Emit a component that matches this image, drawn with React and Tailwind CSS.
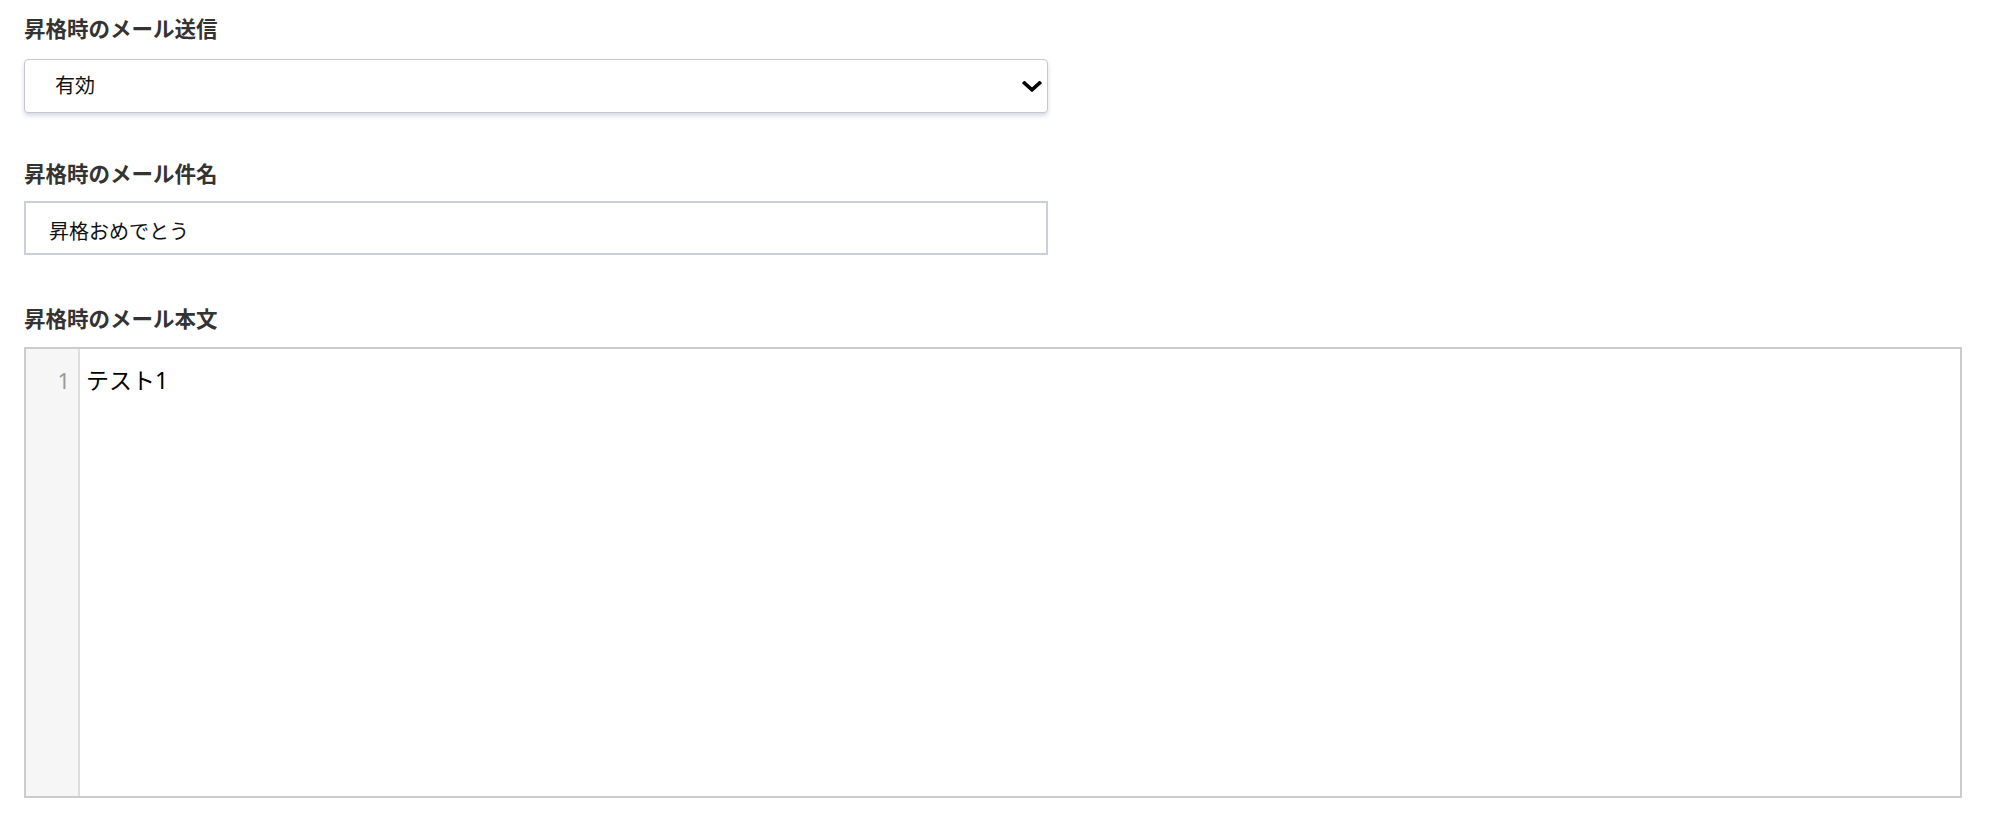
import React, { useState } from "react";

const FONT = { fontFamily: '"Noto Sans", "Noto Sans CJK JP", sans-serif' };

function FieldLabel({ children, className = "" }) {
  return (
    <div className={`text-[21.5px] leading-[30px] font-bold text-[#333333] ${className}`}>
      {children}
    </div>
  );
}

export default function App() {
  const [sendMail, setSendMail] = useState("1");
  const [subject, setSubject] = useState("昇格おめでとう");
  const lines = ["テスト1"];

  return (
    <div className="min-h-screen w-full bg-white pl-[24px] pr-[38px] pt-[14px]" style={FONT}>
      <FieldLabel className="mb-[15px]">昇格時のメール送信</FieldLabel>
      <div className="relative w-[1024px]">
        <select
          value={sendMail}
          onChange={(e) => setSendMail(e.target.value)}
          className="block h-[54px] w-full appearance-none rounded-[4px] border border-[#c5c7d6] bg-white pl-[30px] text-[20px] text-[#111111] shadow-[0_3px_4px_rgba(120,124,150,0.28)] outline-none"
          style={FONT}
        >
          <option value="1">有効</option>
          <option value="0">無効</option>
        </select>
        <svg
          className="pointer-events-none absolute right-[6px] top-[22px] h-[11px] w-[20px]"
          viewBox="0 0 20 11"
          fill="none"
        >
          <polyline points="2.5,2 10,8.8 17.5,2" stroke="#000" strokeWidth="3.6" strokeLinecap="square" />
        </svg>
      </div>

      <FieldLabel className="mt-[46px] mb-[12px]">昇格時のメール件名</FieldLabel>
      <input
        value={subject}
        onChange={(e) => setSubject(e.target.value)}
        className="block h-[54px] w-[1024px] border-2 border-[#cbcedb] bg-white pl-[23px] pt-[4px] text-[20px] text-[#111111] outline-none"
        style={FONT}
      />

      <FieldLabel className="mt-[49px] mb-[13px]">昇格時のメール本文</FieldLabel>
      <div className="flex h-[451px] w-full border-2 border-[#cccccc] bg-white">
        <div className="w-[54px] shrink-0 border-r-2 border-[#dddddd] bg-[#f6f6f6] pt-[15px] pr-[8px] text-right">
          {lines.map((_, i) => (
            <div key={i} className="text-[22px] leading-[32px] text-[#999999]">
              {i + 1}
            </div>
          ))}
        </div>
        <div className="flex-1 pt-[15px] pl-[6px]">
          {lines.map((line, i) => (
            <div key={i} className="text-[23px] leading-[32px] text-[#000000]">
              {line}
            </div>
          ))}
        </div>
      </div>
    </div>
  );
}
